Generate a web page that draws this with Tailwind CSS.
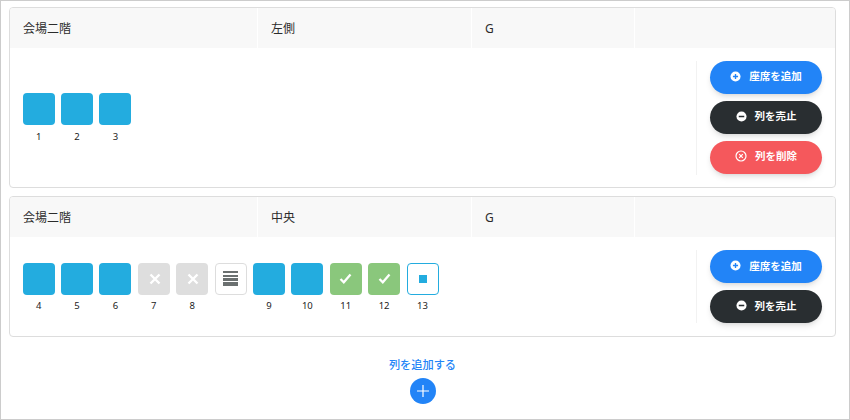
<!DOCTYPE html>
<html lang="ja">
<head>
<meta charset="utf-8">
<script src="https://cdn.jsdelivr.net/npm/@tailwindcss/browser@4"></script>
</head>
<body class="bg-white">
<div class="w-[850px] h-[420px] box-border border border-[#cccccc] bg-white overflow-hidden pl-2 pr-[13px] pt-[6px] font-['Noto_Sans','Noto_Sans_CJK_JP',sans-serif] text-[#333333]">

  <section class="h-[181px] border border-[#dddddd] rounded-[4px] flex flex-col overflow-hidden">
    <div class="h-10 flex text-xs bg-[#f8f8f8] shrink-0 text-[#2b2b2b]">
      <div class="w-[248px] border-r border-white pl-[13px] pt-[2px] flex items-center">会場二階</div>
      <div class="w-[214px] border-r border-white pl-[13px] pt-[2px] flex items-center">左側</div>
      <div class="w-[163px] border-r border-white pl-[13px] pt-[2px] flex items-center">G</div>
      <div class="flex-1"></div>
    </div>
    <div class="flex-1 flex items-center">
      <div class="flex-1 flex gap-[6.4px] pl-[12.6px] pt-[1px]">
        <div class="w-8 flex flex-col items-center gap-[5px]"><div class="w-8 h-8 rounded-[4px] bg-[#23acdf]"></div><span class="text-[9.5px] leading-[14px] text-[#222]">1</span></div>
        <div class="w-8 flex flex-col items-center gap-[5px]"><div class="w-8 h-8 rounded-[4px] bg-[#23acdf]"></div><span class="text-[9.5px] leading-[14px] text-[#222]">2</span></div>
        <div class="w-8 flex flex-col items-center gap-[5px]"><div class="w-8 h-8 rounded-[4px] bg-[#23acdf]"></div><span class="text-[9.5px] leading-[14px] text-[#222]">3</span></div>
      </div>
      <div class="w-[126px] self-center h-[114px] border-l border-[#f2f2f2] pl-[13px] flex flex-col gap-[7px] shrink-0 mr-[13px] box-border">
        <button class="w-[112px] h-[33px] rounded-full bg-[#2284f7] text-white text-[10.5px] font-semibold flex items-center justify-center gap-[8px] shadow-md">
          <svg class="w-[11px] h-[11px] -mt-[2px]" viewBox="0 0 12 12"><circle cx="6" cy="6" r="5.5" fill="#fff"/><path d="M6 3.2v5.6M3.2 6h5.6" stroke="#2284f7" stroke-width="1.5"/></svg>座席を追加
        </button>
        <button class="w-[112px] h-[33px] rounded-full bg-[#292e31] text-white text-[10.5px] font-semibold flex items-center justify-center gap-[8px] shadow-md">
          <svg class="w-[11px] h-[11px] -mt-[2px]" viewBox="0 0 12 12"><circle cx="6" cy="6" r="5.5" fill="#fff"/><path d="M3 6h6" stroke="#292e31" stroke-width="1.7"/></svg>列を売止
        </button>
        <button class="w-[112px] h-[33px] rounded-full bg-[#f5585c] text-white text-[10.5px] font-semibold flex items-center justify-center gap-[8px] shadow-md">
          <svg class="w-[12px] h-[12px] -mt-[2px]" viewBox="0 0 12 12" fill="none" stroke="#fff" stroke-width="1.2"><circle cx="6" cy="6" r="5"/><path d="M4.2 4.2l3.6 3.6M7.8 4.2l-3.6 3.6"/></svg>列を削除
        </button>
      </div>
    </div>
  </section>

  <section class="mt-2 h-[141px] border border-[#dddddd] rounded-[4px] flex flex-col overflow-hidden">
    <div class="h-10 flex text-xs bg-[#f8f8f8] shrink-0 text-[#2b2b2b]">
      <div class="w-[248px] border-r border-white pl-[13px] pt-[2px] flex items-center">会場二階</div>
      <div class="w-[214px] border-r border-white pl-[13px] pt-[2px] flex items-center">中央</div>
      <div class="w-[163px] border-r border-white pl-[13px] pt-[2px] flex items-center">G</div>
      <div class="flex-1"></div>
    </div>
    <div class="flex-1 flex items-center">
      <div class="flex-1 flex gap-[6.4px] pl-[12.6px] pt-[2px]">
        <div class="w-8 flex flex-col items-center gap-[4px]"><div class="w-8 h-8 rounded-[4px] bg-[#23acdf]"></div><span class="text-[9.5px] leading-[14px] text-[#222]">4</span></div>
        <div class="w-8 flex flex-col items-center gap-[4px]"><div class="w-8 h-8 rounded-[4px] bg-[#23acdf]"></div><span class="text-[9.5px] leading-[14px] text-[#222]">5</span></div>
        <div class="w-8 flex flex-col items-center gap-[4px]"><div class="w-8 h-8 rounded-[4px] bg-[#23acdf]"></div><span class="text-[9.5px] leading-[14px] text-[#222]">6</span></div>
        <div class="w-8 flex flex-col items-center gap-[4px]"><div class="w-8 h-8 rounded-[4px] bg-[#dedede] flex items-center justify-center"><svg class="w-[12px] h-[12px] ml-[2px]" viewBox="0 0 12 12"><path d="M1.500 1.500l9 9M10.500 1.500l-9 9" stroke="#fff" stroke-width="2.400"/></svg></div><span class="text-[9.5px] leading-[14px] text-[#222]">7</span></div>
        <div class="w-8 flex flex-col items-center gap-[4px]"><div class="w-8 h-8 rounded-[4px] bg-[#dedede] flex items-center justify-center"><svg class="w-[12px] h-[12px] ml-[2px]" viewBox="0 0 12 12"><path d="M1.500 1.500l9 9M10.500 1.500l-9 9" stroke="#fff" stroke-width="2.400"/></svg></div><span class="text-[9.5px] leading-[14px] text-[#222]">8</span></div>
        <div class="w-8 h-8 rounded-[4px] border border-[#dddddd] bg-white flex flex-col items-center justify-center"><span class="w-[15px] h-[2px] bg-[#6b7070]"></span><span class="w-[15px] h-[2px] mt-[2px] bg-[#6b7070]"></span><span class="w-[15px] h-[3px] mt-[1px] bg-[#6b7070]"></span><span class="w-[15px] h-[4px] mt-[1px] bg-[#6b7070]"></span></div>
        <div class="w-8 flex flex-col items-center gap-[4px]"><div class="w-8 h-8 rounded-[4px] bg-[#23acdf]"></div><span class="text-[9.5px] leading-[14px] text-[#222]">9</span></div>
        <div class="w-8 flex flex-col items-center gap-[4px]"><div class="w-8 h-8 rounded-[4px] bg-[#23acdf]"></div><span class="text-[9.5px] leading-[14px] text-[#222]">10</span></div>
        <div class="w-8 flex flex-col items-center gap-[4px]"><div class="w-8 h-8 rounded-[4px] bg-[#8ac77c] flex items-center justify-center"><svg class="w-[13px] h-[11px]" viewBox="0 0 13 11" fill="none"><path d="M1.500 6l3.300 3.300L11.500 1.500" stroke="#fff" stroke-width="2.300"/></svg></div><span class="text-[9.5px] leading-[14px] text-[#222]">11</span></div>
        <div class="w-8 flex flex-col items-center gap-[4px]"><div class="w-8 h-8 rounded-[4px] bg-[#8ac77c] flex items-center justify-center"><svg class="w-[13px] h-[11px]" viewBox="0 0 13 11" fill="none"><path d="M1.500 6l3.300 3.300L11.500 1.500" stroke="#fff" stroke-width="2.300"/></svg></div><span class="text-[9.5px] leading-[14px] text-[#222]">12</span></div>
        <div class="w-8 flex flex-col items-center gap-[4px]"><div class="w-8 h-8 rounded-[4px] border border-[#23acdf] bg-white flex items-center justify-center"><span class="w-2 h-2 bg-[#23acdf]"></span></div><span class="text-[9.5px] leading-[14px] text-[#222]">13</span></div>
      </div>
      <div class="w-[126px] self-center h-[73px] border-l border-[#f2f2f2] pl-[13px] flex flex-col gap-[7px] shrink-0 mr-[13px] box-border">
        <button class="w-[112px] h-[33px] rounded-full bg-[#2284f7] text-white text-[10.5px] font-semibold flex items-center justify-center gap-[8px] shadow-md">
          <svg class="w-[11px] h-[11px] -mt-[2px]" viewBox="0 0 12 12"><circle cx="6" cy="6" r="5.5" fill="#fff"/><path d="M6 3.2v5.6M3.2 6h5.6" stroke="#2284f7" stroke-width="1.5"/></svg>座席を追加
        </button>
        <button class="w-[112px] h-[33px] rounded-full bg-[#292e31] text-white text-[10.5px] font-semibold flex items-center justify-center gap-[8px] shadow-md">
          <svg class="w-[11px] h-[11px] -mt-[2px]" viewBox="0 0 12 12"><circle cx="6" cy="6" r="5.5" fill="#fff"/><path d="M3 6h6" stroke="#292e31" stroke-width="1.7"/></svg>列を売止
        </button>
      </div>
    </div>
  </section>

  <div class="flex flex-col items-center mt-[20px] gap-[5px]">
    <span class="text-[11.2px] leading-[16px] font-medium text-[#2284f7]">列を追加する</span>
    <button class="w-[26px] h-[26px] rounded-full bg-[#2284f7] flex items-center justify-center">
      <svg class="w-[14px] h-[14px]" viewBox="0 0 14 14"><path d="M7 1v12M1 7h12" stroke="#fff" stroke-width="1.2"/></svg>
    </button>
  </div>
</div>
</body>
</html>
